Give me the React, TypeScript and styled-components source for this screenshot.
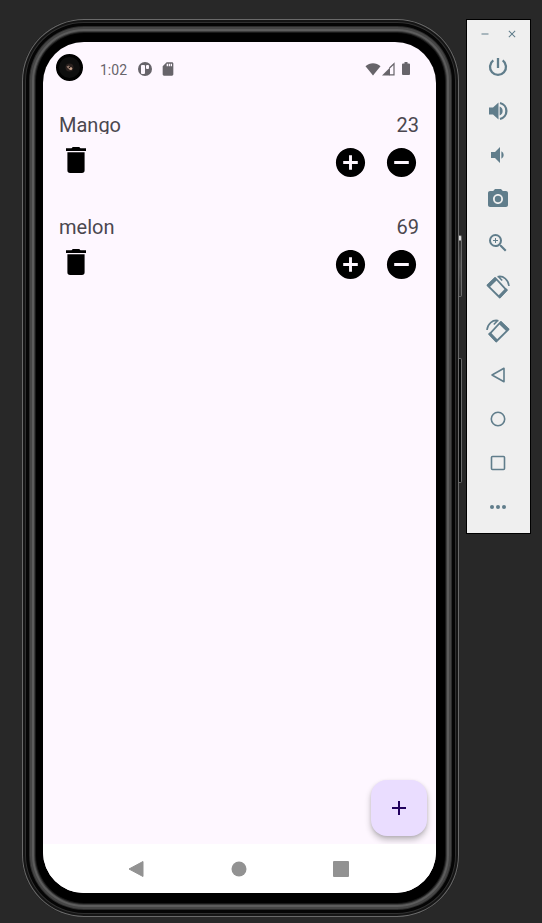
import React from 'react';
import styled, { createGlobalStyle } from 'styled-components';
import {
  MdAdd,
  MdAddCircle,
  MdClose,
  MdPhotoCamera,
  MdRemove,
  MdRemoveCircle,
  MdSdCard,
  MdZoomIn,
} from 'react-icons/md';

const GlobalStyle = createGlobalStyle`
  * { box-sizing: border-box; }
  body {
    margin: 0;
    background: #282828;
    font-family: Roboto, "Liberation Sans", sans-serif;
  }
  button {
    padding: 0;
    border: 0;
    background: none;
    color: inherit;
    font: inherit;
    cursor: pointer;
  }
  svg { display: block; }
`;

const Desktop = styled.div`
  display: flex;
  align-items: flex-start;
  gap: 7px;
  min-height: 100vh;
  padding: 19px 11px 6px 22px;
`;

const Phone = styled.main`
  position: relative;
  flex: 1;
  display: flex;
  min-width: 0;
  min-height: calc(100vh - 25px);
  padding: 23px 23px 24px 21px;
  border-radius: 62px;
  background: #000;
  box-shadow:
    inset 0 0 0 1px #6a6a6a,
    inset 0 0 0 3px #151515,
    inset 0 0 0 4px #303030,
    inset 0 0 0 7px #050505,
    inset 0 0 0 8px #2c2c2c,
    inset 0 0 0 10px #464646,
    inset 0 0 0 12px #5c5c5c,
    inset 0 0 0 13px #3c3c3c,
    inset 0 0 0 14px #181818;
`;

const SideButton = styled.span<{ $top: number; $height: number; $fill: string }>`
  position: absolute;
  right: -3px;
  top: ${(p) => p.$top}px;
  width: 3px;
  height: ${(p) => p.$height}px;
  border: 1px solid #6a6a6a;
  border-left: 0;
  border-radius: 0 2px 2px 0;
  background: ${(p) => p.$fill};
`;

const Screen = styled.div`
  flex: 1;
  display: flex;
  flex-direction: column;
  min-width: 0;
  overflow: hidden;
  border-radius: 41px;
  background: #fef7ff;
`;

const StatusBar = styled.header`
  display: flex;
  align-items: center;
  height: 54px;
  padding: 0 26px 0 13px;
  color: #67646a;
  font-size: 14px;
`;

const Camera = styled.span`
  display: flex;
  align-items: center;
  justify-content: center;
  width: 27px;
  height: 27px;
  margin: 0 17px 4px 0;
  border: 3px solid #000;
  border-radius: 50%;
  background: #0e0e0e;
`;

const StatusGroup = styled.div<{ $end?: boolean }>`
  display: flex;
  align-items: center;
  gap: ${(p) => (p.$end ? 1 : 8)}px;
  margin-left: ${(p) => (p.$end ? 'auto' : '0')};
`;

const Clock = styled.span`
  padding: 2px 3px 0 0;
`;

const ItemList = styled.ul`
  flex: 1;
  margin: 0;
  padding: 16px 17px 0 16px;
  list-style: none;
`;

const Item = styled.li`
  height: 102px;
  color: #4b474f;
`;

const ItemText = styled.div`
  display: flex;
  justify-content: space-between;
  height: 22px;
  font-size: 20px;
  line-height: 26px;
`;

const ItemName = styled.span`
  overflow: hidden;
`;

const ItemActions = styled.div`
  display: flex;
  align-items: flex-start;
  justify-content: space-between;
  padding-top: 10px;
  color: #000;
`;

const ActionButton = styled.button`
  display: flex;
  align-items: center;
  justify-content: center;
  width: 36px;
  height: 36px;
`;

const DeleteButton = styled(ActionButton)`
  width: 34px;
  height: 32px;
`;

const Counter = styled.div`
  display: flex;
  gap: 15px;
`;

const FabRow = styled.div`
  display: flex;
  justify-content: flex-end;
  padding: 0 9px 8px;
`;

const Fab = styled.button`
  display: flex;
  align-items: center;
  justify-content: center;
  width: 56px;
  height: 56px;
  border-radius: 16px;
  background: #eaddff;
  color: #21005d;
  box-shadow: 0 4px 6px rgba(0, 0, 0, 0.24), 0 1px 3px rgba(0, 0, 0, 0.1);
`;

const NavBar = styled.nav`
  display: flex;
  align-items: center;
  justify-content: space-between;
  height: 49px;
  padding: 0 83px 0 81px;
  background: #fff;
  color: #929292;
`;

const NavButton = styled.button`
  display: flex;
  justify-content: center;
  width: 24px;
`;

const Toolbar = styled.aside`
  flex: none;
  width: 65px;
  height: 515px;
  border: 1px solid #000;
  background: #efefef;
  color: #607d8b;
`;

const WindowControls = styled.div`
  display: flex;
  justify-content: flex-end;
  align-items: center;
  gap: 15px;
  height: 25px;
  padding: 3px 12px 0 0;
`;

const ToolButton = styled.button`
  display: flex;
  align-items: center;
  justify-content: center;
  width: 62px;
  height: 44px;
`;

function AppIcon() {
  return (
    <svg width="14" height="14" viewBox="0 0 14 14">
      <circle cx="7" cy="7" r="7" fill="currentColor" />
      <rect x="3" y="3" width="4" height="9" rx="1" fill="#fef7ff" />
      <rect x="8" y="3" width="3" height="4" rx="1" fill="#fef7ff" />
    </svg>
  );
}

function Lens() {
  return (
    <svg width="9" height="9" viewBox="0 0 9 9">
      <circle cx="4.5" cy="4.5" r="4" fill="#2a211f" />
      <path d="M1.5 3.5 4 2.5l1.5 2L4 6 2.5 5Z" fill="#8d7468" />
      <circle cx="5.7" cy="5.5" r="1.6" fill="#c9a48e" />
      <circle cx="4.6" cy="4.5" r=".7" fill="#16110f" />
    </svg>
  );
}

function Wifi() {
  return (
    <svg width="16" height="14" viewBox="0 0 16 14">
      <path d="M.5 4.3C4.8.3 11.2.3 15.5 4.3L8 13.5Z" fill="currentColor" />
    </svg>
  );
}

function Signal() {
  return (
    <svg width="13" height="14" viewBox="0 0 13 14">
      <path d="M0 13.5 8 5.5v8Z" fill="currentColor" />
      <path d="M7.5 6 12 1.7v11.2H7.5" fill="none" stroke="currentColor" strokeWidth="1.2" />
    </svg>
  );
}

const BatteryShape = styled.svg`
  margin-left: 6px;
`;

function Battery() {
  return (
    <BatteryShape width="8" height="14" viewBox="0 0 8 14">
      <path d="M2.5 0h3v1.5H7a1 1 0 0 1 1 1V12a1 1 0 0 1-1 1H1a1 1 0 0 1-1-1V2.500a1 1 0 0 1 1-1h1.500Z" fill="currentColor" />
    </BatteryShape>
  );
}

function Trash() {
  return (
    <svg width="20" height="26" viewBox="0 0 20 26">
      <path d="M0 1.300h5.500L6.800 0h6.400l1.300 1.300H20V4H0ZM1.400 5.300h17.200v18A2.700 2.700 0 0 1 15.900 26H4.100a2.700 2.700 0 0 1-2.700-2.700Z" fill="currentColor" />
    </svg>
  );
}

function Power() {
  return (
    <svg width="20" height="20" viewBox="0 0 20 20" fill="none" stroke="currentColor" strokeWidth="2.300">
      <path d="M10 1v10M5.300 3.400a8 8 0 1 0 9.400 0" />
    </svg>
  );
}

function Volume({ loud }: { loud?: boolean }) {
  return loud ? (
    <svg width="20" height="20" viewBox="0 0 20 20">
      <path d="M1 6.500h4l5.500-5v17l-5.500-5H1Z" fill="currentColor" />
      <path d="M11.600 5.600a4.700 4.700 0 0 1 0 8.800Z" fill="currentColor" />
      <path d="M12 2a8.200 8.200 0 0 1 0 16" fill="none" stroke="currentColor" strokeWidth="2.300" />
    </svg>
  ) : (
    <svg width="20" height="20" viewBox="0 0 20 20">
      <path d="M3 7h4l5-5v16l-5-5H3Z" fill="currentColor" />
      <path d="M13.400 6.200a4.300 4.300 0 0 1 0 7.600Z" fill="currentColor" />
    </svg>
  );
}

const RotateShape = styled.svg<{ $mirrored?: boolean }>`
  transform: ${(p) => (p.$mirrored ? 'scaleX(-1)' : 'none')};
`;

function Rotate({ mirrored }: { mirrored?: boolean }) {
  return (
    <RotateShape $mirrored={mirrored} width="24" height="24" viewBox="0 0 24 24">
      <path d="M1.500 10.300 9.300 3 20.500 15.200l-6.700 7.300Z" fill="none" stroke="currentColor" strokeWidth="1.800" strokeLinejoin="round" />
      <path d="M.8 10 8.800 2.300l2.500 2.500-7.900 7.600ZM12 20.900l7.700-7.800 2.300 2-7.800 8Z" fill="currentColor" />
      <path d="M11.500 1.700C17.500.2 22.500 5 23 11M12 1.200l4.200 4.300" fill="none" stroke="currentColor" strokeWidth="1.600" />
    </RotateShape>
  );
}

function Outline({ shape }: { shape: 'back' | 'home' | 'recent' }) {
  return (
    <svg width="16" height="16" viewBox="0 0 16 16" fill="none" stroke="currentColor" strokeWidth="1.600" strokeLinejoin="round">
      {shape === 'back' && <path d="M14 1.300v13.400L2 8Z" />}
      {shape === 'home' && <circle cx="8" cy="8" r="6.700" />}
      {shape === 'recent' && <rect x="1.500" y="1.500" width="13" height="13" rx="1" />}
    </svg>
  );
}

function Dots() {
  return (
    <svg width="16" height="16" viewBox="0 0 16 16" fill="currentColor">
      <circle cx="2" cy="8" r="2" />
      <circle cx="8" cy="8" r="2" />
      <circle cx="14" cy="8" r="2" />
    </svg>
  );
}

const items = [
  { name: 'Mango', count: 23 },
  { name: 'melon', count: 69 },
];

const tools = [
  { label: 'Power', icon: <Power /> },
  { label: 'Volume up', icon: <Volume loud /> },
  { label: 'Volume down', icon: <Volume /> },
  { label: 'Take screenshot', icon: <MdPhotoCamera size={24} /> },
  { label: 'Zoom mode', icon: <MdZoomIn size={24} /> },
  { label: 'Rotate left', icon: <Rotate /> },
  { label: 'Rotate right', icon: <Rotate mirrored /> },
  { label: 'Back', icon: <Outline shape="back" /> },
  { label: 'Home', icon: <Outline shape="home" /> },
  { label: 'Overview', icon: <Outline shape="recent" /> },
  { label: 'More', icon: <Dots /> },
];

export default function App() {
  return (
    <>
      <GlobalStyle />
      <Desktop>
        <Phone>
          <SideButton $top={216} $height={62} $fill="linear-gradient(#d8d8d8 0 4px, #333 5px, #4a4a4a 50%, #303030)" />
          <SideButton $top={339} $height={125} $fill="#060808" />
          <Screen>
            <StatusBar>
              <Camera>
                <Lens />
              </Camera>
              <StatusGroup>
                <Clock>1:02</Clock>
                <AppIcon />
                <MdSdCard size={16} />
              </StatusGroup>
              <StatusGroup $end>
                <Wifi />
                <Signal />
                <Battery />
              </StatusGroup>
            </StatusBar>
            <ItemList>
              {items.map((item) => (
                <Item key={item.name}>
                  <ItemText>
                    <ItemName>{item.name}</ItemName>
                    <span>{item.count}</span>
                  </ItemText>
                  <ItemActions>
                    <DeleteButton aria-label={`Delete ${item.name}`}>
                      <Trash />
                    </DeleteButton>
                    <Counter>
                      <ActionButton aria-label={`Increase ${item.name}`}>
                        <MdAddCircle size={35} />
                      </ActionButton>
                      <ActionButton aria-label={`Decrease ${item.name}`}>
                        <MdRemoveCircle size={35} />
                      </ActionButton>
                    </Counter>
                  </ItemActions>
                </Item>
              ))}
            </ItemList>
            <FabRow>
              <Fab aria-label="Add item">
                <MdAdd size={24} />
              </Fab>
            </FabRow>
            <NavBar>
              <NavButton aria-label="Back">
                <svg width="16" height="16" viewBox="0 0 16 16">
                  <path d="M15 .5v15L1 8Z" fill="currentColor" stroke="currentColor" strokeLinejoin="round" />
                </svg>
              </NavButton>
              <NavButton aria-label="Home">
                <svg width="16" height="16" viewBox="0 0 16 16">
                  <circle cx="8" cy="8" r="7.500" fill="currentColor" />
                </svg>
              </NavButton>
              <NavButton aria-label="Overview">
                <svg width="16" height="16" viewBox="0 0 16 16">
                  <rect width="16" height="16" rx="1" fill="currentColor" />
                </svg>
              </NavButton>
            </NavBar>
          </Screen>
        </Phone>
        <Toolbar aria-label="Emulator controls">
          <WindowControls>
            <button aria-label="Minimize">
              <MdRemove size={12} />
            </button>
            <button aria-label="Close">
              <MdClose size={12} />
            </button>
          </WindowControls>
          {tools.map((tool) => (
            <ToolButton key={tool.label} aria-label={tool.label}>
              {tool.icon}
            </ToolButton>
          ))}
        </Toolbar>
      </Desktop>
    </>
  );
}
